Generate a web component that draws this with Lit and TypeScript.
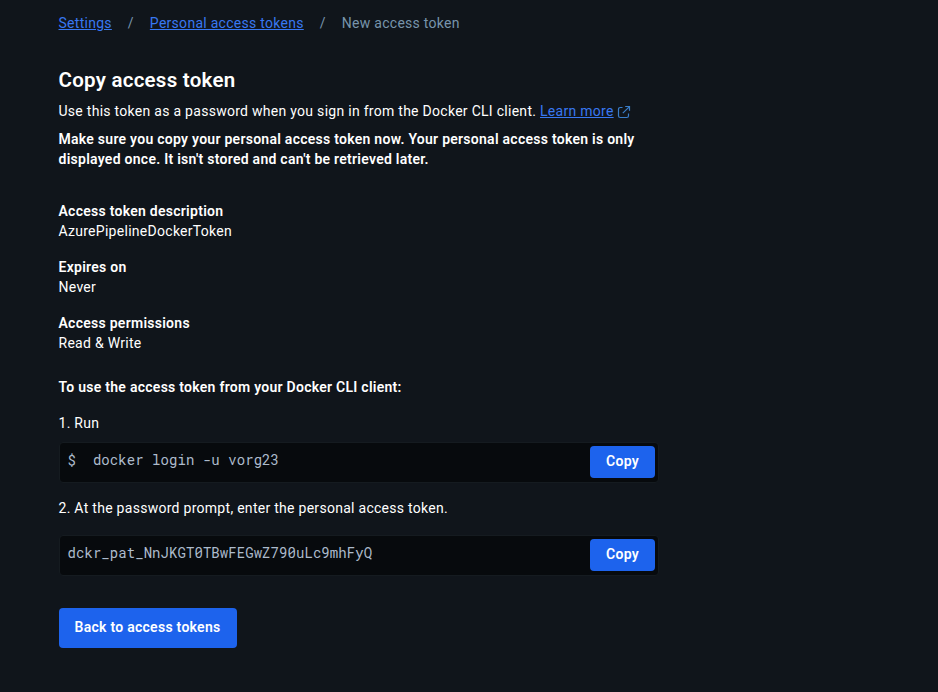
import { LitElement, html, css } from "lit";
import { customElement, property } from "lit/decorators.js";

@customElement("code-row")
class CodeRow extends LitElement {
  @property() prompt = "";
  @property() value = "";

  static styles = css`
    :host { display: block; }
    .box {
      display: flex;
      justify-content: space-between;
      box-sizing: border-box;
      width: 600px;
      height: 41px;
      padding: 3px;
      padding-left: 7.5px;
      background: #070a0d;
      border: 1px solid #151b20;
      border-radius: 4px;
    }
    .code {
      font-family: "Roboto Mono", "DejaVu Sans Mono", monospace;
      font-size: 14px;
      line-height: 28px;
      letter-spacing: 0.06px;
      color: #adbbcc;
      white-space: pre;
    }
    .copy {
      width: 65px;
      height: 32px;
      padding: 0 0 2px;
      border: 0;
      border-radius: 4px;
      background: #1d63ed;
      color: #fff;
      font: 600 14px/30px Roboto, sans-serif;
      letter-spacing: 0.27px;
    }
  `;

  render() {
    return html`<div class="box">
      <span class="code">${this.prompt ? this.prompt + "  " : ""}${this.value}</span>
      <button class="copy">Copy</button>
    </div>`;
  }
}

@customElement("app-root")
class AppRoot extends LitElement {
  static styles = css`
    :host {
      display: block;
      box-sizing: border-box;
      height: 692px;
      overflow: hidden;
      padding: 13px 0 0 58.5px;
      background: #10151b;
      color: #fff;
      font: 400 14px/20px Roboto, sans-serif;
      letter-spacing: 0.28px;
    }
    .crumbs { display: flex; color: #7794ab; }
    .sep { width: 38px; text-align: center; }
    .link { color: #3878f2; text-decoration: underline; text-underline-offset: 1px; text-decoration-thickness: 1px; }
    h1 { margin: 33px 0 7px; font-size: 20.5px; line-height: 28px; font-weight: 600; letter-spacing: 0.25px; }
    p { margin: 0; }
    .intro { display: flex; align-items: center; }
    .icon { width: 14px; height: 14px; margin: 2px 0 0 3.5px; }
    .warning, dt, .usage { font-weight: 600; letter-spacing: 0.265px; }
    .warning { width: 600px; margin-top: 8px; }
    dl { display: flex; flex-direction: column; gap: 16px; margin: 32px 0 24px; }
    dd { margin: 0; }
    .step { margin: 16px 0 9px; }
    .step.second { margin: 15px 0 17px; }
    code-row { margin-left: 0.5px; }
    .back {
      width: 178px;
      height: 40px;
      margin: 32px 0 0 0.5px;
      padding: 0 1px 2px 0;
      border: 0;
      border-radius: 4px;
      background: #1d63ed;
      color: #fff;
      font: 600 14px/38px Roboto, sans-serif;
      letter-spacing: 0.27px;
    }
  `;

  render() {
    const details = [
      ["Access token description", "AzurePipelineDockerToken"],
      ["Expires on", "Never"],
      ["Access permissions", "Read & Write"],
    ];
    return html`
      <nav class="crumbs">
        <a class="link">Settings</a><span class="sep">/</span>
        <a class="link">Personal access tokens</a><span class="sep">/</span>
        <span>New access token</span>
      </nav>
      <h1>Copy access token</h1>
      <p class="intro">
        <span>Use this token as a password when you sign in from the Docker CLI client. <a class="link">Learn more</a></span>
        <svg class="icon" viewBox="0 0 14 14" fill="none" stroke="#3a7ec9" stroke-width="1.2">
          <path d="M5.5 2.5H3.3Q1.5 2.5 1.5 4.3V10.7Q1.5 12.5 3.3 12.5H9.7Q11.5 12.5 11.5 10.7V8.5M8.2 1.5H12.5V5.8M12.2 1.8L5.8 8.2" />
        </svg>
      </p>
      <p class="warning">
        Make sure you copy your personal access token now. Your personal access token is only<br />displayed once. It isn't stored and can't be retrieved later.
      </p>
      <dl>${details.map(([k, v]) => html`<div><dt>${k}</dt><dd>${v}</dd></div>`)}</dl>
      <p class="usage">To use the access token from your Docker CLI client:</p>
      <p class="step">1. Run</p>
      <code-row prompt="$" value="docker login -u vorg23"></code-row>
      <p class="step second">2. At the password prompt, enter the personal access token.</p>
      <code-row value="dckr_pat_NnJKGT0TBwFEGwZ790uLc9mhFyQ"></code-row>
      <button class="back">Back to access tokens</button>
    `;
  }
}
